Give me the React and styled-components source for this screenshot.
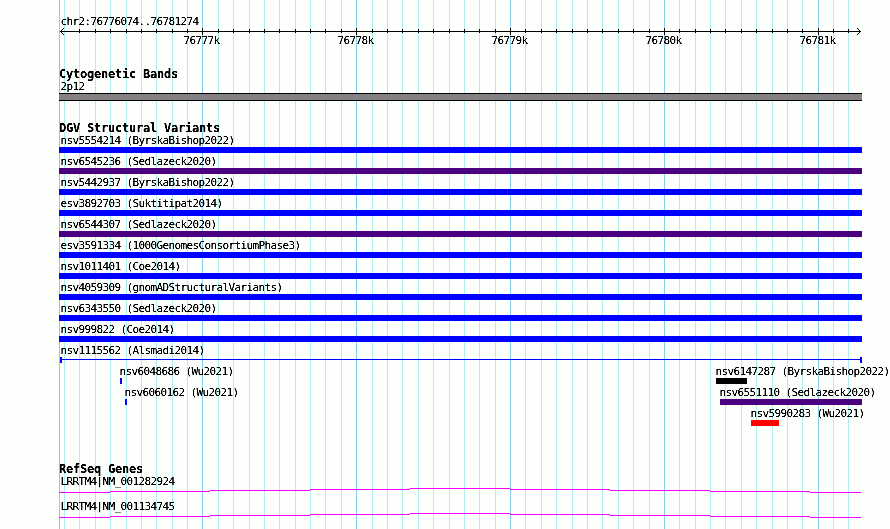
import React from "react";
import styled, { createGlobalStyle } from "styled-components";

const GlobalStyle = createGlobalStyle`
  body {
    margin: 0;
    background: #fdfffc;
  }
`;

// whole browser panel
const Panel = styled.div`
  position: relative;
  width: 890px;
  height: 529px;
  overflow: hidden;
  background: #fdfffc;
  color: #000;
  font-family: "DejaVu Sans Mono", monospace;
  font-size: 11px;
  line-height: 13px;
  letter-spacing: -0.622px;
`;

// vertical guides behind every track
const Guides = styled.svg`
  position: absolute;
  top: 0;
  left: 0;
`;

const Tracks = styled.div`
  position: relative;
  width: 803px;
  margin-left: 59px;
  padding-top: 15px;
`;

const Track = styled.section`
  margin-top: ${(props) => props.$gap}px;
`;

const Heading = styled.h2`
  height: 13px;
  margin: 0;
  font-size: 12px;
  font-weight: bold;
  line-height: 14px;
  letter-spacing: -0.224px;
  white-space: nowrap;
  filter: url(#crisp);
`;

const Label = styled.div`
  height: 13px;
  margin-left: ${(props) => props.$shift ?? 1}px;
  text-indent: 0.5px;
  white-space: nowrap;
  filter: url(#crisp);
`;

const RulerSvg = styled.svg`
  display: block;
  overflow: visible;
`;

const Band = styled.div`
  height: 6px;
  border-top: 1px solid #000;
  border-bottom: 1px solid #000;
  background: #848084;
`;

// variants
const VariantRow = styled.div`
  display: grid;
  height: 19px;
  margin-bottom: 2px;
`;

const Variant = styled.div`
  grid-area: 1 / 1;
  width: ${(props) => props.$width}px;
  margin-left: ${(props) => props.$start}px;
`;

const Bar = styled.div`
  height: 6px;
  background: ${(props) => props.$color};
`;

const Span = styled.div`
  display: flex;
  align-items: center;
  justify-content: space-between;
  height: 6px;
  margin-left: 1px;
  background: linear-gradient(#0000ff, #0000ff) 0 2px / 100% 1px no-repeat;

  &::before,
  &::after {
    content: "";
    width: 2px;
    height: 6px;
    background: #0000ff;
  }
`;

const GeneRow = styled.div`
  height: 18px;
  margin-bottom: 7px;
`;

const GeneLine = styled.svg`
  display: block;
`;

const BLUE = "#0000ff";
const INDIGO = "#4b0082";

const minor = [
  64, 79, 95, 110, 126, 141, 156, 172, 187, 218, 233, 249, 264, 279, 295, 310,
  325, 341, 372, 387, 402, 418, 433, 449, 464, 479, 495, 525, 541, 556, 572,
  587, 602, 618, 633, 649, 679, 695, 710, 725, 741, 756, 772, 787, 802, 833,
  848,
];

const major = [
  { x: 202, text: "76777k" },
  { x: 356, text: "76778k" },
  { x: 510, text: "76779k" },
  { x: 664, text: "76780k" },
  { x: 818, text: "76781k" },
];

const full = (name, color) => [{ name, color, start: 0, width: 803 }];

const variants = [
  full("nsv5554214 (ByrskaBishop2022)", BLUE),
  full("nsv6545236 (Sedlazeck2020)", INDIGO),
  full("nsv5442937 (ByrskaBishop2022)", BLUE),
  full("esv3892703 (Suktitipat2014)", BLUE),
  full("nsv6544307 (Sedlazeck2020)", INDIGO),
  full("esv3591334 (1000GenomesConsortiumPhase3)", BLUE),
  full("nsv1011401 (Coe2014)", BLUE),
  full("nsv4059309 (gnomADStructuralVariants)", BLUE),
  full("nsv6343550 (Sedlazeck2020)", BLUE),
  full("nsv999822 (Coe2014)", BLUE),
  [{ name: "nsv1115562 (Alsmadi2014)", span: true, start: 0, width: 803 }],
  [
    { name: "nsv6048686 (Wu2021)", color: BLUE, start: 61, width: 2 },
    { name: "nsv6147287 (ByrskaBishop2022)", color: "#000", start: 657, width: 31 },
  ],
  [
    { name: "nsv6060162 (Wu2021)", color: BLUE, start: 66, width: 2 },
    { name: "nsv6551110 (Sedlazeck2020)", color: INDIGO, start: 661, width: 142 },
  ],
  [{ name: "nsv5990283 (Wu2021)", color: "#ff0000", start: 692, width: 28 }],
];

const genes = ["LRRTM4|NM_001282924", "LRRTM4|NM_001134745"];

// [start, end, y] of each step of the intron line
const steps = [
  [0, 51, 4],
  [51, 151, 3],
  [151, 251, 2],
  [251, 351, 1],
  [351, 451, 0],
  [451, 551, 1],
  [551, 651, 2],
  [651, 751, 3],
  [751, 802, 4],
];

function GuideLines() {
  return (
    <Guides width="890" height="529" shapeRendering="crispEdges">
      {/* hardens the glyph edges of the labels */}
      <filter id="crisp" x="0" y="-20%" width="2000%" height="140%" colorInterpolationFilters="sRGB">
        <feComponentTransfer>
          <feFuncA type="linear" slope="2.4" intercept="-0.5" />
        </feComponentTransfer>
      </filter>
      {minor.map((x) => (
        <rect key={x} x={x} y="0" width="1" height="529" fill="#afeeee" />
      ))}
      {[59, ...major.map((m) => m.x)].map((x) => (
        <rect key={x} x={x} y="0" width="1" height="529" fill="#87ceeb" />
      ))}
    </Guides>
  );
}

function Ruler() {
  return (
    <RulerSvg width="803" height="19" viewBox="59 28 803 19">
      <g shapeRendering="crispEdges">
        <rect x="60" y="31" width="801" height="1" />
        {minor.slice(1).map((x) => (
          <rect key={x} x={x} y="29" width="1" height="4" />
        ))}
        {major.map(({ x }) => (
          <rect key={x} x={x} y="28" width="1" height="7" />
        ))}
        {[1, 2, 3].map((d) => (
          <React.Fragment key={d}>
            <rect x={60 + d} y={31 - d} width="1" height="1" />
            <rect x={60 + d} y={31 + d} width="1" height="1" />
            <rect x={860 - d} y={31 - d} width="1" height="1" />
            <rect x={860 - d} y={31 + d} width="1" height="1" />
          </React.Fragment>
        ))}
      </g>
      <g filter="url(#crisp)">
        {major.map(({ x, text }) => (
          <text key={x} x={x - 18.5} y="44">
            {text}
          </text>
        ))}
      </g>
    </RulerSvg>
  );
}

function Gene({ name }) {
  return (
    <GeneRow>
      <Label>{name}</Label>
      <GeneLine width="803" height="5" shapeRendering="crispEdges">
        {steps.map(([from, to, y]) => (
          <rect key={from} x={from} y={y} width={to - from} height="1" fill="#ff00ff" />
        ))}
      </GeneLine>
    </GeneRow>
  );
}

function App() {
  return (
    <>
      <GlobalStyle />
      <Panel>
        <GuideLines />
        <Tracks>
          <Label>chr2:76776074..76781274</Label>
          <Ruler />
          <Track $gap={20}>
            <Heading>Cytogenetic Bands</Heading>
            <Label>2p12</Label>
            <Band />
          </Track>
          <Track $gap={20}>
            <Heading>DGV Structural Variants</Heading>
            {variants.map((row) => (
              <VariantRow key={row[0].name}>
                {row.map((v) => (
                  <Variant key={v.name} $start={v.start} $width={v.width}>
                    <Label $shift={v.start === 0 ? 1 : -1}>{v.name}</Label>
                    {v.span ? <Span /> : <Bar $color={v.color} />}
                  </Variant>
                ))}
              </VariantRow>
            ))}
          </Track>
          <Track $gap={36}>
            <Heading>RefSeq Genes</Heading>
            {genes.map((name) => (
              <Gene key={name} name={name} />
            ))}
          </Track>
        </Tracks>
      </Panel>
    </>
  );
}

export default App;
